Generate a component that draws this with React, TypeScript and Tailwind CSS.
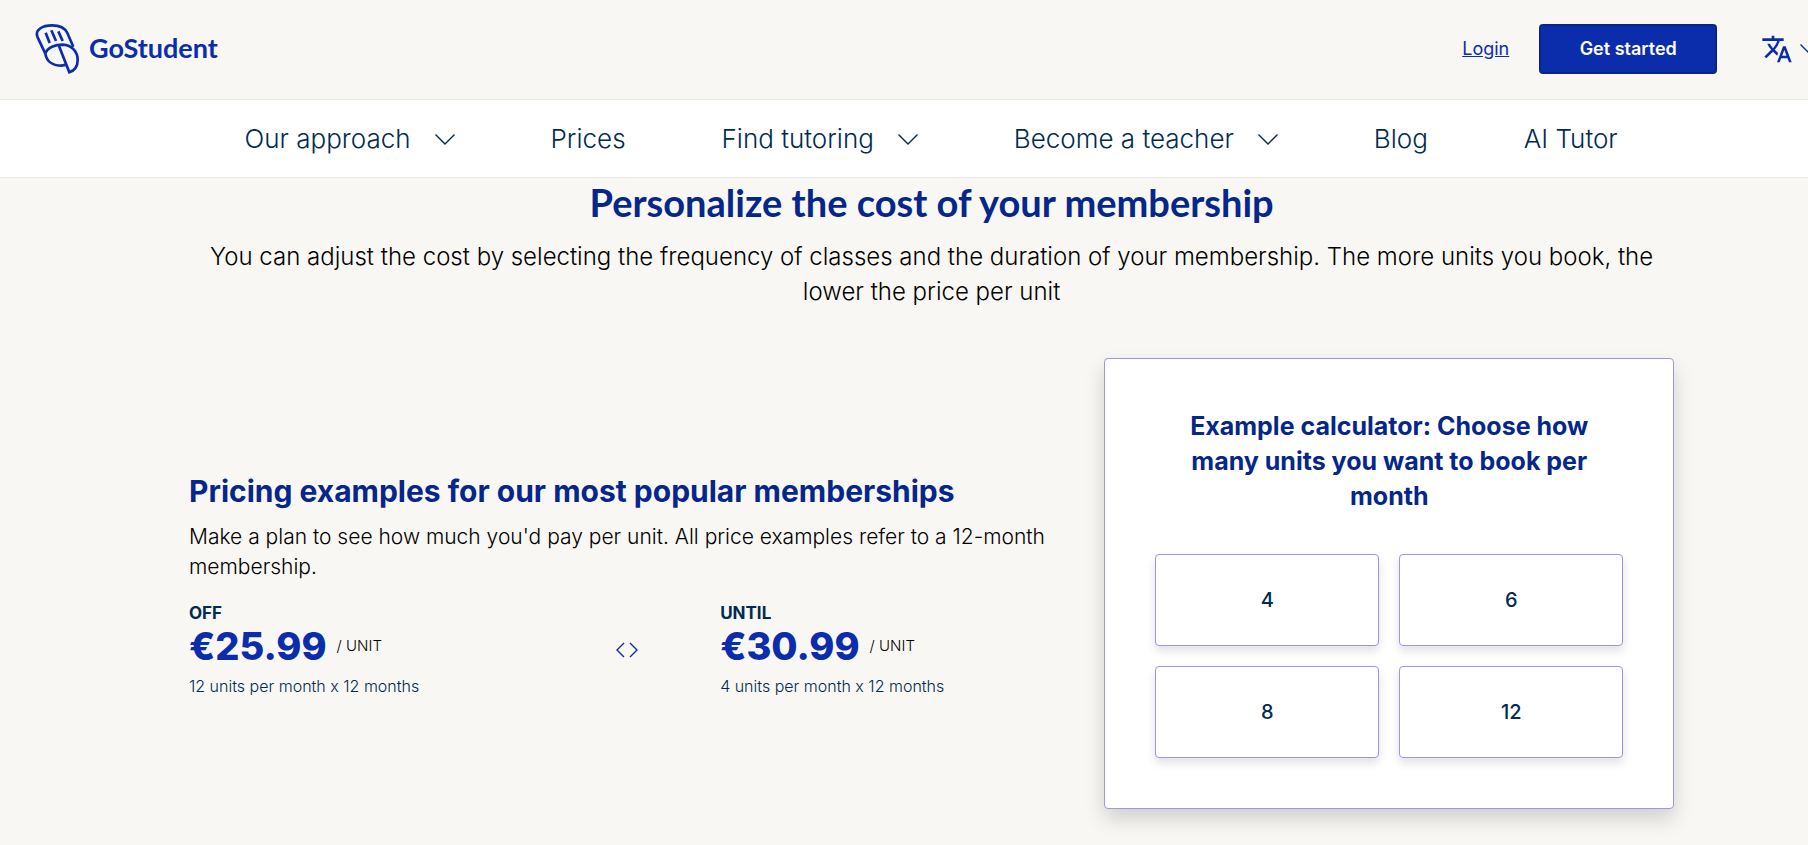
import React, { useState } from "react";
import { MdTranslate } from "react-icons/md";

const navItems = [
  { label: "Our approach", hasMenu: true },
  { label: "Prices", hasMenu: false },
  { label: "Find tutoring", hasMenu: true },
  { label: "Become a teacher", hasMenu: true },
  { label: "Blog", hasMenu: false },
  { label: "AI Tutor", hasMenu: false },
];

const prices = [
  { label: "OFF", price: "€25.99", detail: "12 units per month x 12 months" },
  { label: "UNTIL", price: "€30.99", detail: "4 units per month x 12 months" },
];

const unitOptions = [4, 6, 8, 12];

function Chevron() {
  return (
    <svg
      className="shrink-0"
      width="20"
      height="12"
      viewBox="0 0 20 12"
      fill="none"
      stroke="currentColor"
      strokeWidth="1.4"
    >
      <path d="M0.5 1.5l9.5 9.5L19.5 1.5" />
    </svg>
  );
}

function Logo() {
  return (
    <a href="#" className="flex items-center gap-[9px] text-[#0b2dac]">
      <svg
        width="45"
        height="51"
        viewBox="105 69 135 153"
        fill="none"
        stroke="currentColor"
        strokeWidth="8"
      >
        <path d="M136 161L113 112C103 89 128 76 156 76C180 76 195 84 202 99L220 140" />
        <path d="M136 161C142 142 166 134 188 134C216 135 233 155 233 180C233 200 223 212 208 217L177 138" />
        <path d="M136 161C140 184 158 197 184 197L200 194" />
        <path d="M137 98l12 31M154 91l14 32M175 94l13 29" />
      </svg>
      <span className="font-['Lato'] text-[27px] font-bold">GoStudent</span>
    </a>
  );
}

function PriceBlock({ item }: { item: (typeof prices)[number] }) {
  return (
    <div>
      <p className="text-[17px] leading-6 font-bold text-[#002b52]">
        {item.label}
      </p>
      <p className="flex items-center gap-[10px] leading-[42px]">
        <span className="text-[38px] font-extrabold text-[#0b2dac]">
          {item.price}
        </span>
        <span className="text-[15px] font-[350] text-black">/ UNIT</span>
      </p>
      <p className="mt-[7px] text-base leading-6 font-[350] text-[#002b52]">
        {item.detail}
      </p>
    </div>
  );
}

function App() {
  const [units, setUnits] = useState<number | null>(null);

  return (
    <div className="min-h-screen overflow-hidden bg-[#f8f7f3] font-['Inter',sans-serif]">
      <div className="w-[103%]">
        <header className="flex h-[100px] items-center justify-between border-b border-[#eae8e3] pr-[42px] pb-[2px] pl-[35px]">
          <Logo />
          <div className="flex items-center text-[#0b2dac]">
            <a href="#" className="mr-[30px] text-lg underline">
              Login
            </a>
            <button className="mr-[44px] h-[50px] w-[178px] rounded border-2 border-[#06268a] bg-[#0b2dac] text-lg font-semibold text-white">
              Get started
            </button>
            <button
              aria-label="Language"
              className="flex items-center gap-[7px]"
            >
              <MdTranslate size={32} />
              <Chevron />
            </button>
          </div>
        </header>

        <nav className="flex h-[78px] items-center justify-center gap-24 border-b border-[#eae8e3] bg-white text-[26px] font-[350] text-[#002b52]">
          {navItems.map((item) =>
            item.hasMenu ? (
              <button key={item.label} className="flex items-center gap-6">
                {item.label}
                <Chevron />
              </button>
            ) : (
              <a key={item.label} href="#">
                {item.label}
              </a>
            )
          )}
        </nav>

        <main className="pr-[188px] pl-[189px] text-black">
          <h1 className="pt-[2px] text-center font-['Lato'] text-[38px] leading-[44px] font-bold text-[#05268a]">
            Personalize the cost of your membership
          </h1>
          <p className="mt-[15px] px-2 text-center text-2xl leading-[35px] font-light">
            You can adjust the cost by selecting the frequency of classes and
            the duration of your membership. The more units you book, the lower
            the price per unit
          </p>

          <div className="mt-[49px] flex items-center">
            <section className="flex-1 pt-[2px] pr-[30px]">
              <h2 className="text-3xl leading-10 font-bold text-[#05268a]">
                Pricing examples for our most popular memberships
              </h2>
              <p className="mt-[11px] text-[21px] leading-[30px] font-light">
                Make a plan to see how much you'd pay per unit. All price
                examples refer to a 12-month membership.
              </p>
              <div className="mt-[19px] grid grid-cols-[39fr_21fr_40fr] items-center">
                <PriceBlock item={prices[0]} />
                <svg
                  className="justify-self-center text-[#0b2dac]"
                  width="22"
                  height="16"
                  viewBox="0 0 22 16"
                  fill="none"
                  stroke="currentColor"
                  strokeWidth="1.4"
                >
                  <path d="M8 1L1 8l7 7M14 1l7 7-7 7" />
                </svg>
                <PriceBlock item={prices[1]} />
              </div>
            </section>

            <section className="w-[570px] rounded border border-[#a193e6] bg-white p-[50px] shadow-[0_10px_20px_rgba(0,0,0,0.16)]">
              <h3 className="px-5 text-center text-[25px] leading-[35px] font-bold text-[#05268a]">
                Example calculator: Choose how many units you want to book per
                month
              </h3>
              <div className="mt-10 grid grid-cols-2 gap-5">
                {unitOptions.map((option) => (
                  <button
                    key={option}
                    onClick={() => setUnits(option)}
                    aria-pressed={units === option}
                    className="h-[92px] rounded border border-[#a193e6] bg-white text-xl font-medium text-[#002b52] shadow-[0_5px_10px_rgba(0,0,0,0.12)] aria-pressed:bg-[#f0eefc]"
                  >
                    {option}
                  </button>
                ))}
              </div>
            </section>
          </div>
        </main>
      </div>
    </div>
  );
}

export default App;
